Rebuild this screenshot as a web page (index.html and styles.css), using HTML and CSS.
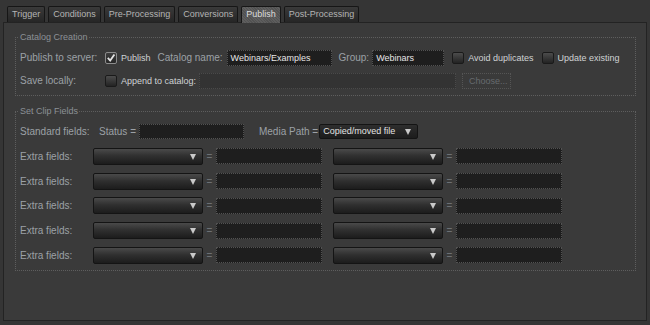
FILE: index.html
```html
<!DOCTYPE html>
<html lang="en">
<head>
    <meta charset="UTF-8">
    <title>Publish</title>
    <link rel="stylesheet" href="styles.css">
</head>
<body>
    <div class="tabs">
        <div class="tab">Trigger</div>
        <div class="tab">Conditions</div>
        <div class="tab">Pre-Processing</div>
        <div class="tab">Conversions</div>
        <div class="tab active">Publish</div>
        <div class="tab">Post-Processing</div>
    </div>
    <div class="panel">
        <fieldset class="group">
            <legend>Catalog Creation</legend>
            <div class="row">
                <span class="lbl lbl-wide">Publish to server:</span>
                <span class="check checked">
                    <svg width="10" height="10" viewBox="0 0 10 10"><path d="M1.8 4.8 L4.2 7.6 L8.4 1.6" fill="none" stroke="#e4e4e4" stroke-width="1.8"/></svg>
                </span>
                <span class="clabel">Publish</span>
                <span class="lbl ml-name">Catalog name:</span>
                <div class="field w-name">Webinars/Examples</div>
                <span class="lbl ml-group">Group:</span>
                <div class="field w-group">Webinars</div>
                <span class="check ml-check"></span>
                <span class="clabel">Avoid duplicates</span>
                <span class="check ml-check"></span>
                <span class="clabel">Update existing</span>
            </div>
            <div class="row">
                <span class="lbl lbl-wide">Save locally:</span>
                <span class="check"></span>
                <span class="clabel">Append to catalog:</span>
                <div class="field w-path"></div>
                <div class="button">Choose...</div>
            </div>
        </fieldset>

        <fieldset class="group clip">
            <legend>Set Clip Fields</legend>
            <div class="row">
                <span class="lbl lbl-std">Standard fields:</span>
                <span class="lbl">Status =</span>
                <div class="field w-status"></div>
                <span class="lbl ml-media">Media Path =</span>
                <div class="select small w-media">Copied/moved file</div>
            </div>
            <div class="row">
                <span class="lbl lbl-extra">Extra fields:</span>
                <div class="select"></div><span class="eq">=</span><div class="field w-extra"></div>
                <div class="select second"></div><span class="eq">=</span><div class="field w-extra"></div>
            </div>
            <div class="row">
                <span class="lbl lbl-extra">Extra fields:</span>
                <div class="select"></div><span class="eq">=</span><div class="field w-extra"></div>
                <div class="select second"></div><span class="eq">=</span><div class="field w-extra"></div>
            </div>
            <div class="row">
                <span class="lbl lbl-extra">Extra fields:</span>
                <div class="select"></div><span class="eq">=</span><div class="field w-extra"></div>
                <div class="select second"></div><span class="eq">=</span><div class="field w-extra"></div>
            </div>
            <div class="row">
                <span class="lbl lbl-extra">Extra fields:</span>
                <div class="select"></div><span class="eq">=</span><div class="field w-extra"></div>
                <div class="select second"></div><span class="eq">=</span><div class="field w-extra"></div>
            </div>
            <div class="row">
                <span class="lbl lbl-extra">Extra fields:</span>
                <div class="select"></div><span class="eq">=</span><div class="field w-extra"></div>
                <div class="select second"></div><span class="eq">=</span><div class="field w-extra"></div>
            </div>
        </fieldset>
    </div>
</body>
</html>
```

FILE: styles.css
```css
body {
    margin: 0;
    padding: 6px 0 0 0;
    background-color: #353535;
    font-family: "Liberation Sans", Arial, sans-serif;
    font-size: 10px;
    color: #9ca1a6;
    height: 325px;
    box-sizing: border-box;
    overflow: hidden;
}
.tabs {
    display: flex;
    gap: 3px;
    padding-left: 7px;
}
.tab {
    height: 15px;
    line-height: 15px;
    padding: 0 4px;
    font-size: 9px;
    color: #b4b4b4;
    border: 1px solid #161616;
    border-bottom: none;
    border-radius: 2px 2px 0 0;
    background: linear-gradient(#3a3a3a, #262626);
}
.tab.active {
    color: #dcdcdc;
    background: repeating-linear-gradient(45deg, #5e5e5e 0 1px, #525252 1px 2px);
    height: 16px;
    margin-bottom: -1px;
}
.panel {
    margin-left: 3px;
    width: 644px;
    height: 299px;
    box-sizing: border-box;
    border: 1px solid #232323;
    background: #3a3a3a;
    padding: 8px 10px 0 11px;
}
.group {
    margin: 0;
    padding: 6px 4px 6px 4px;
    border: 1px dotted #5e5e5e;
    min-width: 0;
}
.group legend {
    padding: 0 1px;
    margin-left: -1px;
    font-size: 9px;
    line-height: 12px;
    color: #8c9196;
}
.clip {
    margin-top: 9px;
    padding-top: 6px;
}
.row {
    display: flex;
    align-items: center;
    height: 17px;
    white-space: nowrap;
}
.row + .row {
    margin-top: 6px;
}
.clip .row + .row {
    margin-top: 7.8px;
}
.lbl-wide { width: 85px; }
.lbl-std { width: 79px; }
.lbl-extra { width: 73px; }
.ml-name { margin-left: 7px; }
.ml-group { margin-left: 7px; }
.ml-media { margin-left: 15px; }
.ml-check { margin-left: 8px; }
.check {
    width: 10px;
    height: 10px;
    border: 1px solid #1a1a1a;
    border-radius: 2px;
    background: linear-gradient(#4c4c4c, #232323);
    margin-right: 4px;
    display: flex;
    align-items: center;
    justify-content: center;
}
.check.checked {
    border-color: #8c8c8c;
    background: linear-gradient(#3e3e3e, #262626);
}
.clabel {
    font-size: 9px;
    color: #cfd2d4;
}
.field {
    box-sizing: border-box;
    height: 16px;
    line-height: 14px;
    background: #1e1e1e;
    border: 1px dotted #525252;
    color: #e6e6e6;
    font-size: 9px;
    padding-left: 3px;
    margin-left: 4px;
}
.w-name { width: 105px; }
.w-group { width: 72px; margin-left: 3px; }
.w-path { width: 257px; margin-left: 3px; border-color: #4a4a4a; background: #333; }
.w-status { width: 105px; height: 15px; margin-left: 3px; }
.w-extra { width: 106px; margin-left: 0; }
.button {
    margin-left: 6px;
    width: 49px;
    height: 16px;
    box-sizing: border-box;
    border: 1px dotted #555;
    line-height: 14px;
    padding-left: 6px;
    font-size: 9px;
    color: #666a6e;
}
.select {
    position: relative;
    width: 110px;
    height: 17px;
    box-sizing: border-box;
    border: 1px solid #141414;
    border-radius: 2px;
    background: linear-gradient(#4a4a4a, #303030 45%, #1c1c1c);
}
.select::after {
    content: "";
    position: absolute;
    right: 6px;
    top: 5px;
    border-left: 3px solid transparent;
    border-right: 3px solid transparent;
    border-top: 6px solid #c9c9c9;
}
.select.second {
    margin-left: 11px;
}
.select.small {
    width: 99px;
    height: 15px;
    margin-left: 1px;
    line-height: 13px;
    padding-left: 3px;
    font-size: 9px;
    color: #e2e2e2;
    background: linear-gradient(#2e2e2e, #1c1c1c);
}
.select.small::after {
    top: 4px;
}
.eq {
    width: 13px;
    text-align: center;
    color: #6c7074;
}
```
